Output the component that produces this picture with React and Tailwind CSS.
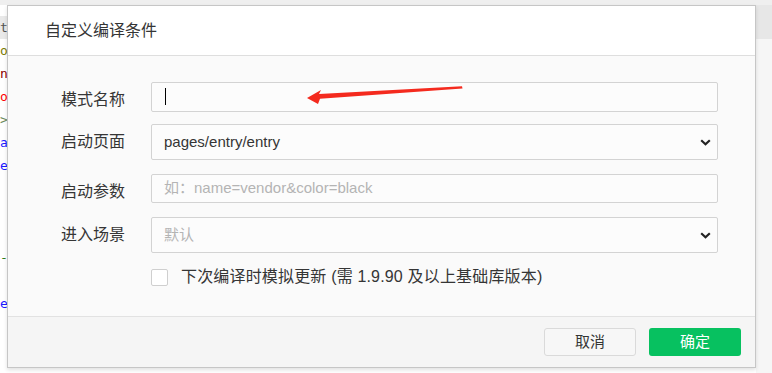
import React from 'react'

const codeLines = [
  { ch: 't-', cls: 'text-[#555] bg-[#e9e9e9]' },
  { ch: 'o', cls: 'text-[#7a7a00]' },
  { ch: 'n', cls: 'text-[#8b0000]' },
  { ch: 'o', cls: 'text-[#ff0000]' },
  { ch: '>', cls: 'text-[#6a8a5a]' },
  { ch: 'a', cls: 'text-[#1a1aff]' },
  { ch: 'e', cls: 'text-[#1a1aff]' },
  { ch: '', cls: '' },
  { ch: '', cls: '' },
  { ch: '', cls: '' },
  { ch: '-', cls: 'text-[#2e7d1e]' },
  { ch: '', cls: '' },
  { ch: 'e', cls: 'text-[#1a1aff]' },
]

function Chevron() {
  return (
    <svg width="11" height="7" viewBox="0 0 11 7" className="shrink-0">
      <path d="M1.2 1.3 L5.5 5.3 L9.8 1.3" fill="none" stroke="#222" strokeWidth="2.2" />
    </svg>
  )
}

function Row({ label, children, labelOffset = false, className = '' }) {
  return (
    <div className={`flex items-center pl-[53px] pr-[37px] ${className}`}>
      <div className={`w-[90px] shrink-0 text-[16px] text-[#353535] ${labelOffset ? 'mt-[7px]' : ''}`}>
        {label}
      </div>
      {children}
    </div>
  )
}

export default function App() {
  return (
    <div className="relative w-[772px] h-[373px] overflow-hidden bg-white font-['Liberation_Sans','Noto_Sans_CJK_SC',sans-serif]">
      {/* background ide */}
      <div className="h-[5px] bg-[#efefef]" />
      <div className="flex h-[368px]">
        <div className="w-[7px] overflow-hidden font-['DejaVu_Sans_Mono',monospace] text-[13px] leading-[23px] pt-[11px]">
          {codeLines.map((l, i) => (
            <div key={i} className={`h-[23px] whitespace-nowrap ${l.cls}`}>
              {l.ch}
            </div>
          ))}
        </div>
        <div className="flex-1" />
        <div className="w-[16px] flex flex-col">
          <div className="h-[34px] bg-[#e7e7e7]" />
          <div className="flex-1 bg-[#f6f6f6]" />
        </div>
      </div>

      {/* dialog */}
      <div className="absolute left-[7px] top-[5px] w-[749px] h-[363px] flex flex-col border border-[#c6c6c6] shadow-[0_2px_4px_rgba(0,0,0,0.12)]">
        <div className="h-[50px] shrink-0 flex items-center px-[37px] bg-white border-b border-[#dedede] text-[16px] text-[#353535]">
          自定义编译条件
        </div>

        <div className="flex-1 bg-[#fafafa] pt-[25px]">
          <Row label="模式名称" labelOffset>
            <div className="relative flex-1 h-[30px] border border-[#d3d3d3] rounded-[2px] bg-[#fcfcfc] flex items-center pl-[13px]">
              <div className="w-px h-[17px] bg-black" />
            </div>
          </Row>

          <Row label="启动页面" className="mt-[12px]">
            <div className="flex-1 h-[36px] border border-[#d3d3d3] rounded-[2px] bg-[#fcfcfc] flex items-center justify-between pl-[12px] pr-[6px] text-[15px] text-[#353535]">
              <span>pages/entry/entry</span>
              <Chevron />
            </div>
          </Row>

          <Row label="启动参数" labelOffset className="mt-[13px]">
            <div className="flex-1 h-[29px] border border-[#d3d3d3] rounded-[2px] bg-[#fcfcfc] flex items-center pl-[12px] text-[15px] text-[#b4b4b4]">
              如：name=vendor&amp;color=black
            </div>
          </Row>

          <Row label="进入场景" className="mt-[13px]">
            <div className="flex-1 h-[36px] border border-[#d3d3d3] rounded-[2px] bg-[#fcfcfc] flex items-center justify-between pl-[12px] pr-[6px] text-[15px] text-[#b4b4b4]">
              <span>默认</span>
              <Chevron />
            </div>
          </Row>

          <div className="flex items-center pl-[143px] mt-[12px]">
            <div className="w-[17px] h-[17px] border border-[#cfcfcf] rounded-[2px] bg-white" />
            <span className="ml-[13px] text-[16px] tracking-[0.17px] text-[#353535]">
              下次编译时模拟更新 (需 1.9.90 及以上基础库版本)
            </span>
          </div>
        </div>

        <div className="h-[51px] shrink-0 bg-[#f5f5f5] border-t border-[#e2e2e2] flex items-center justify-end gap-[13px] pr-[14px]">
          <button className="w-[92px] h-[28px] rounded-[3px] border border-[#dadada] bg-[#f7f7f7] text-[15px] text-[#353535]">
            取消
          </button>
          <button className="w-[92px] h-[28px] rounded-[3px] bg-[#07c160] text-[15px] text-white">
            确定
          </button>
        </div>
      </div>

      {/* red annotation arrow */}
      <svg className="absolute left-0 top-0 pointer-events-none" width="772" height="373">
        <polygon
          points="307,98 321,90 319,94 462,86.3 462.5,88.5 320,98.8 318,104"
          fill="#f42a1e"
        />
      </svg>
    </div>
  )
}
